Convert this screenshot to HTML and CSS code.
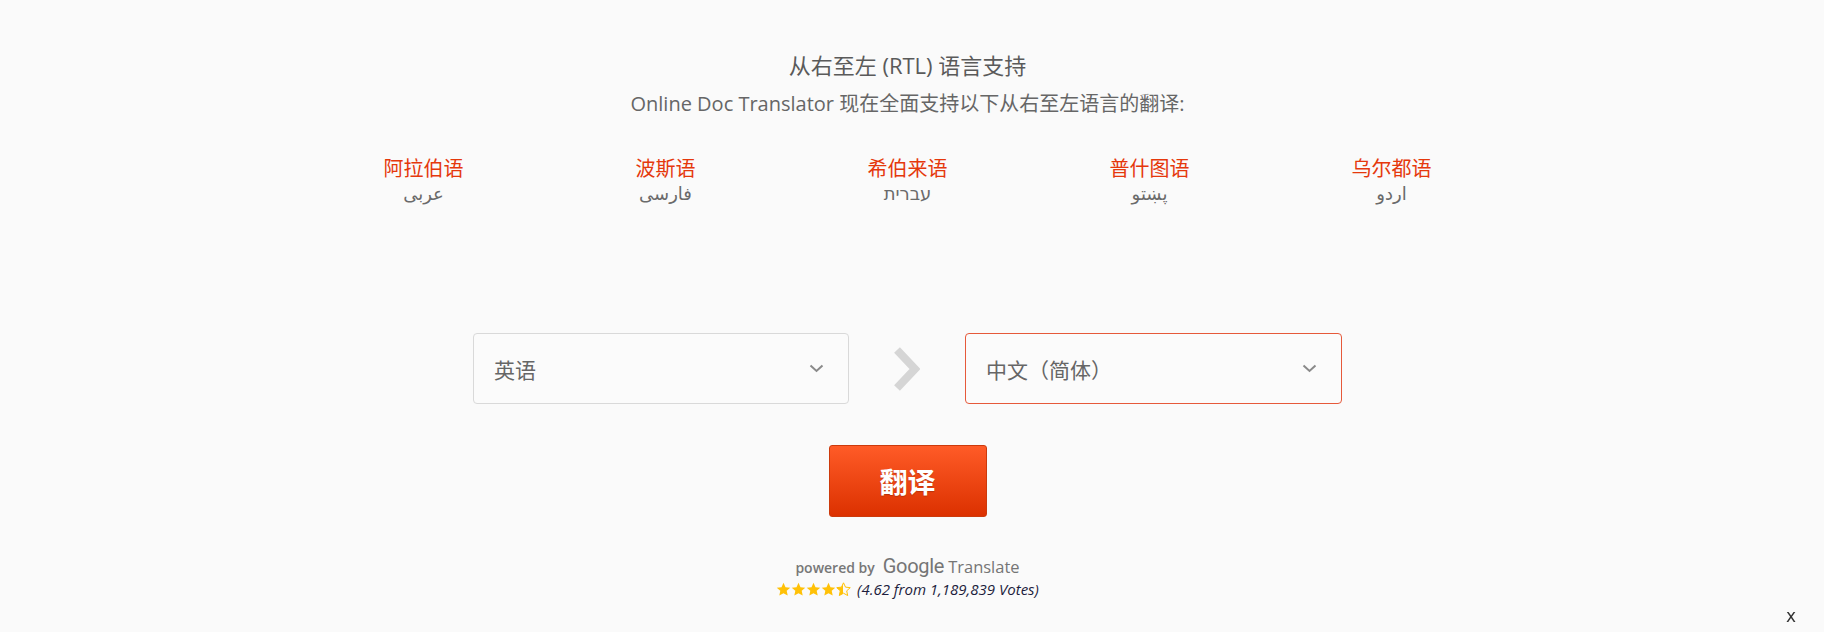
FILE: index.html
```html
<!DOCTYPE html>
<html lang="zh-CN">
<head>
    <meta charset="UTF-8">
    <meta name="viewport" content="width=device-width, initial-scale=1.0">
    <title>Online Doc Translator</title>
    <link rel="stylesheet" href="styles.css">
</head>
<body>
    <div class="page">
        <!-- Блок про RTL языки -->
        <div class="rtl-info">
            <h2 class="rtl-title">从右至左 (RTL) 语言支持</h2>
            <p class="rtl-sub">Online Doc Translator 现在全面支持以下从右至左语言的翻译:</p>

            <div class="lang-list">
                <div class="lang-item">
                    <span class="lang-name">阿拉伯语</span>
                    <span class="lang-native">عربى</span>
                </div>
                <div class="lang-item">
                    <span class="lang-name">波斯语</span>
                    <span class="lang-native">فارسی</span>
                </div>
                <div class="lang-item">
                    <span class="lang-name">希伯来语</span>
                    <span class="lang-native">עברית</span>
                </div>
                <div class="lang-item">
                    <span class="lang-name">普什图语</span>
                    <span class="lang-native">پښتو</span>
                </div>
                <div class="lang-item">
                    <span class="lang-name">乌尔都语</span>
                    <span class="lang-native">اردو</span>
                </div>
            </div>
        </div>

        <!-- Выбор языков -->
        <div class="select-row">
            <div class="select-box">
                <span>英语</span>
                <svg class="caret" width="15" height="9" viewBox="0 0 15 9"><polyline points="1.5,1.5 7.5,7 13.5,1.5" fill="none" stroke="#8a8a8a" stroke-width="2"/></svg>
            </div>
            <div class="arrow">
                <svg width="26" height="44" viewBox="0 0 26 44"><polyline points="3,3 21,22 3,41" fill="none" stroke="#d5d5d5" stroke-width="8"/></svg>
            </div>
            <div class="select-box active">
                <span>中文（简体）</span>
                <svg class="caret" width="15" height="9" viewBox="0 0 15 9"><polyline points="1.5,1.5 7.5,7 13.5,1.5" fill="none" stroke="#8a8a8a" stroke-width="2"/></svg>
            </div>
        </div>

        <button class="translate-btn" type="button">翻译</button>

        <div class="powered">
            <span class="powered-by">powered by</span>
            <span class="google">Google</span>
            <span class="gt">Translate</span>
        </div>

        <div class="rating">
            <svg width="75" height="15" viewBox="0 0 75 15">
                <defs>
                    <path id="star" d="M7.5 0.8l2 4.35 4.75.5-3.55 3.2 1 4.7L7.5 11.2l-4.2 2.35 1-4.7-3.55-3.2 4.75-.5z"/>
                    <linearGradient id="half">
                        <stop offset="50%" stop-color="#ffc107"/>
                        <stop offset="50%" stop-color="#fafafa"/>
                    </linearGradient>
                </defs>
                <use href="#star" x="0" fill="#ffc107"/>
                <use href="#star" x="15" fill="#ffc107"/>
                <use href="#star" x="30" fill="#ffc107"/>
                <use href="#star" x="45" fill="#ffc107"/>
                <use href="#star" x="60" fill="url(#half)" stroke="#ffc107" stroke-width="1"/>
            </svg>
            <span class="votes">(4.62 from 1,189,839 Votes)</span>
        </div>
    </div>

    <div class="close-x">x</div>
</body>
</html>
```

FILE: styles.css
```css
body {
    margin: 0;
    background-color: #fafafa;
    font-family: "Open Sans", "Noto Sans CJK SC", "DejaVu Sans", sans-serif;
    color: #666;
    height: 632px;
    overflow: hidden;
}
.page {
    display: flex;
    flex-direction: column;
    align-items: center;
    padding: 50px 9px 0 0; /* центр чуть левее середины */
}
.rtl-info {
    display: flex;
    flex-direction: column;
    align-items: center;
}
.rtl-title {
    margin: 0;
    font-size: 22px;
    line-height: 30px;
    font-weight: normal;
    color: #5a5a5a;
}
.rtl-sub {
    margin: 10px 0 0;
    font-size: 20px;
    line-height: 28px;
    color: #666;
}
.lang-list {
    display: grid;
    grid-template-columns: repeat(5, 242px);
    margin-top: 38px;
}
.lang-item {
    display: flex;
    flex-direction: column;
    align-items: center;
}
.lang-name {
    font-size: 20px;
    line-height: 26px;
    color: #e5380c;
}
.lang-native {
    font-size: 18px;
    line-height: 24px;
    color: #6a6a6a;
    font-family: "DejaVu Sans", "Noto Sans", sans-serif;
    direction: rtl;
}
.select-row {
    display: flex;
    align-items: center;
    margin-top: 127px;
}
.select-box {
    width: 376px;
    height: 71px;
    box-sizing: border-box;
    border: 1px solid #d9d9d9;
    border-radius: 4px;
    background-color: #fbfbfb;
    display: flex;
    align-items: center;
    justify-content: space-between;
    padding: 0 24px 0 20px;
    font-size: 21px;
    color: #666;
}
.select-box.active {
    width: 377px;
    border-color: #e6593a;
}
.arrow {
    width: 116px;
    display: flex;
    justify-content: center;
}
.translate-btn {
    margin-top: 41px;
    width: 158px;
    height: 72px;
    border: 1px solid #cc3a0c;
    border-radius: 3px;
    background: linear-gradient(#ff5b27, #dc3100);
    color: #fff;
    font-family: "Noto Sans CJK SC", sans-serif;
    font-size: 28px;
    font-weight: bold;
    text-shadow: 0 1px 1px rgba(0, 0, 0, 0.2);
    cursor: pointer;
}
.powered {
    display: flex;
    align-items: baseline;
    margin-top: 37px;
    height: 24px;
    color: #757575;
}
.powered-by {
    font-size: 14px;
    font-weight: 600;
    color: #777;
    margin-right: 8px;
}
.google {
    font-family: Roboto, "Open Sans", sans-serif;
    font-size: 20px;
    font-weight: 400;
    letter-spacing: -0.3px;
    margin-right: 4px;
}
.gt {
    font-size: 16.5px;
}
.rating {
    display: flex;
    align-items: center;
    gap: 6px;
    margin-top: 1px;
}
.votes {
    font-size: 15px;
    font-style: italic;
    color: #1d1d3d;
}
.close-x {
    position: fixed;
    right: 28px;
    bottom: 6px;
    font-size: 17px;
    color: #333;
    font-family: "DejaVu Sans", sans-serif;
}
```
